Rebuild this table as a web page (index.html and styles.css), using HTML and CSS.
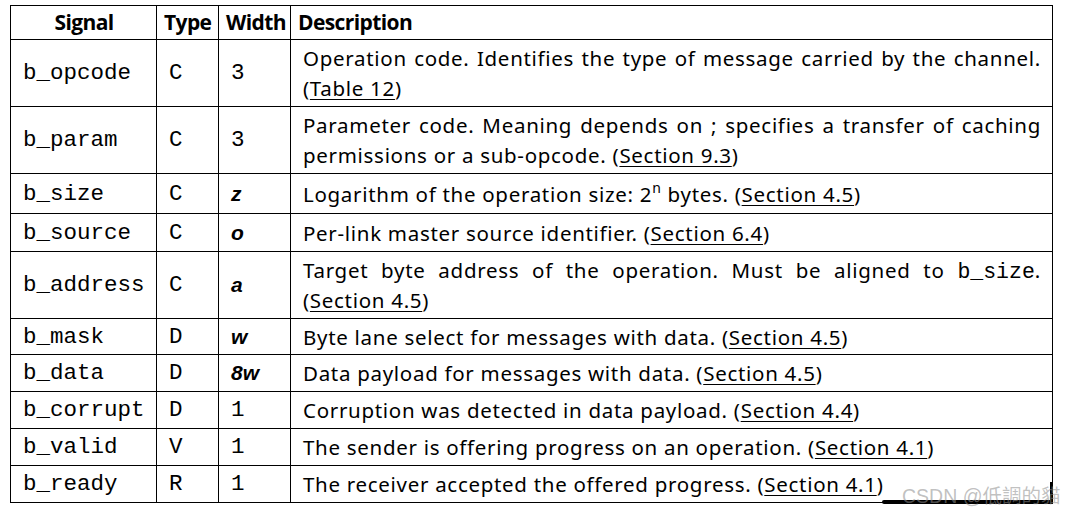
FILE: index.html
```html
<!DOCTYPE html>
<html>
<head>
<meta charset="utf-8">
<link rel="stylesheet" href="styles.css">
</head>
<body>
<div class="page">
<table class="sig">
  <colgroup>
    <col class="c-sig"><col class="c-type"><col class="c-width"><col class="c-desc">
  </colgroup>
  <thead>
    <tr><th class="center">Signal</th><th>Type</th><th>Width</th><th>Description</th></tr>
  </thead>
  <tbody>
    <tr class="two"><td class="mono">b_opcode</td><td class="mono">C</td><td class="mono">3</td><td class="desc">Operation code. Identifies the type of message carried by the channel. (<a>Table 12</a>)</td></tr>
    <tr class="two"><td class="mono">b_param</td><td class="mono">C</td><td class="mono">3</td><td class="desc">Parameter code. Meaning depends on ; specifies a transfer of caching permissions or a sub-opcode. (<a>Section 9.3</a>)</td></tr>
    <tr class="sup-row"><td class="mono">b_size</td><td class="mono">C</td><td class="var">z</td><td class="desc">Logarithm of the operation size: 2<sup>n</sup> bytes. (<a>Section 4.5</a>)</td></tr>
    <tr class="plus1"><td class="mono">b_source</td><td class="mono">C</td><td class="var">o</td><td class="desc">Per-link master source identifier. (<a>Section 6.4</a>)</td></tr>
    <tr class="two"><td class="mono">b_address</td><td class="mono">C</td><td class="var">a</td><td class="desc">Target byte address of the operation. Must be aligned to <code>b_size</code>. (<a>Section 4.5</a>)</td></tr>
    <tr class="minus1"><td class="mono">b_mask</td><td class="mono">D</td><td class="var">w</td><td class="desc">Byte lane select for messages with data. (<a>Section 4.5</a>)</td></tr>
    <tr><td class="mono">b_data</td><td class="mono">D</td><td class="var">8w</td><td class="desc">Data payload for messages with data. (<a>Section 4.5</a>)</td></tr>
    <tr><td class="mono">b_corrupt</td><td class="mono">D</td><td class="mono">1</td><td class="desc">Corruption was detected in data payload. (<a>Section 4.4</a>)</td></tr>
    <tr><td class="mono">b_valid</td><td class="mono">V</td><td class="mono">1</td><td class="desc">The sender is offering progress on an operation. (<a>Section 4.1</a>)</td></tr>
    <tr><td class="mono">b_ready</td><td class="mono">R</td><td class="mono">1</td><td class="desc">The receiver accepted the offered progress. (<a>Section 4.1</a>)</td></tr>
  </tbody>
</table>
<div class="scribble-h"></div>
<div class="scribble-v"></div>
<div class="watermark">CSDN @低調的貓</div>
</div>
</body>
</html>
```
FILE: styles.css
```css
html, body {
  margin: 0;
  padding: 0;
  background: #fff;
}
.page {
  position: relative;
  width: 1066px;
  height: 512px;
  padding: 5px 0 0 10px;
  box-sizing: border-box;
}
.sig {
  border-collapse: collapse;
  table-layout: fixed;
  width: 1042px;
  color: #000;
}
.c-sig { width: 146px; }
.c-type { width: 62px; }
.c-width { width: 72px; }
.c-desc { width: 762px; }
.sig th, .sig td {
  border: 1px solid #000;
}
.sig th {
  font-family: "Open Sans", "Noto Sans", sans-serif;
  font-weight: 700;
  font-size: 21px;
  letter-spacing: -0.6px;
  line-height: 27px;
  padding: 3px 6px 3px 7px;
  text-align: left;
}
.sig th.center { text-align: center; }
.sig td {
  padding: 3px 11px 3px 12px;
  line-height: 30px;
  vertical-align: middle;
}
.sig .sup-row td {
  padding-top: 5px;
  padding-bottom: 4px;
}
.sig .plus1 td {
  padding-top: 4px;
}
.sig .minus1 td {
  padding-bottom: 2px;
}
.mono {
  font-family: "Liberation Mono", "DejaVu Sans Mono", monospace;
  font-size: 22.5px;
}
.var {
  font-family: "Liberation Sans", Arial, sans-serif;
  font-weight: 700;
  font-style: italic;
  font-size: 21px;
}
.desc {
  font-family: "Noto Sans", "Open Sans", sans-serif;
  font-size: 20.5px;
  letter-spacing: 0.7px;
  text-align: justify;
}
.desc a {
  text-decoration: underline;
  text-underline-offset: 3px;
  text-decoration-thickness: 1px;
}
.desc code {
  font-family: "Liberation Mono", monospace;
  font-size: 21.5px;
  letter-spacing: 0;
  line-height: 1;
}
.desc sup {
  font-size: 14px;
  line-height: 0;
  vertical-align: 9px;
}
.scribble-h {
  position: absolute;
  left: 882px;
  top: 500px;
  width: 171px;
  height: 4px;
  background: #000;
  border-radius: 2px;
}
.scribble-v {
  position: absolute;
  left: 1050px;
  top: 482px;
  width: 3px;
  height: 22px;
  background: #000;
}
.watermark {
  position: absolute;
  left: 902px;
  top: 480px;
  font-family: "Liberation Sans", "Noto Sans CJK SC", sans-serif;
  font-size: 19.5px;
  color: rgba(140, 140, 140, 0.55);
  white-space: nowrap;
}
```
